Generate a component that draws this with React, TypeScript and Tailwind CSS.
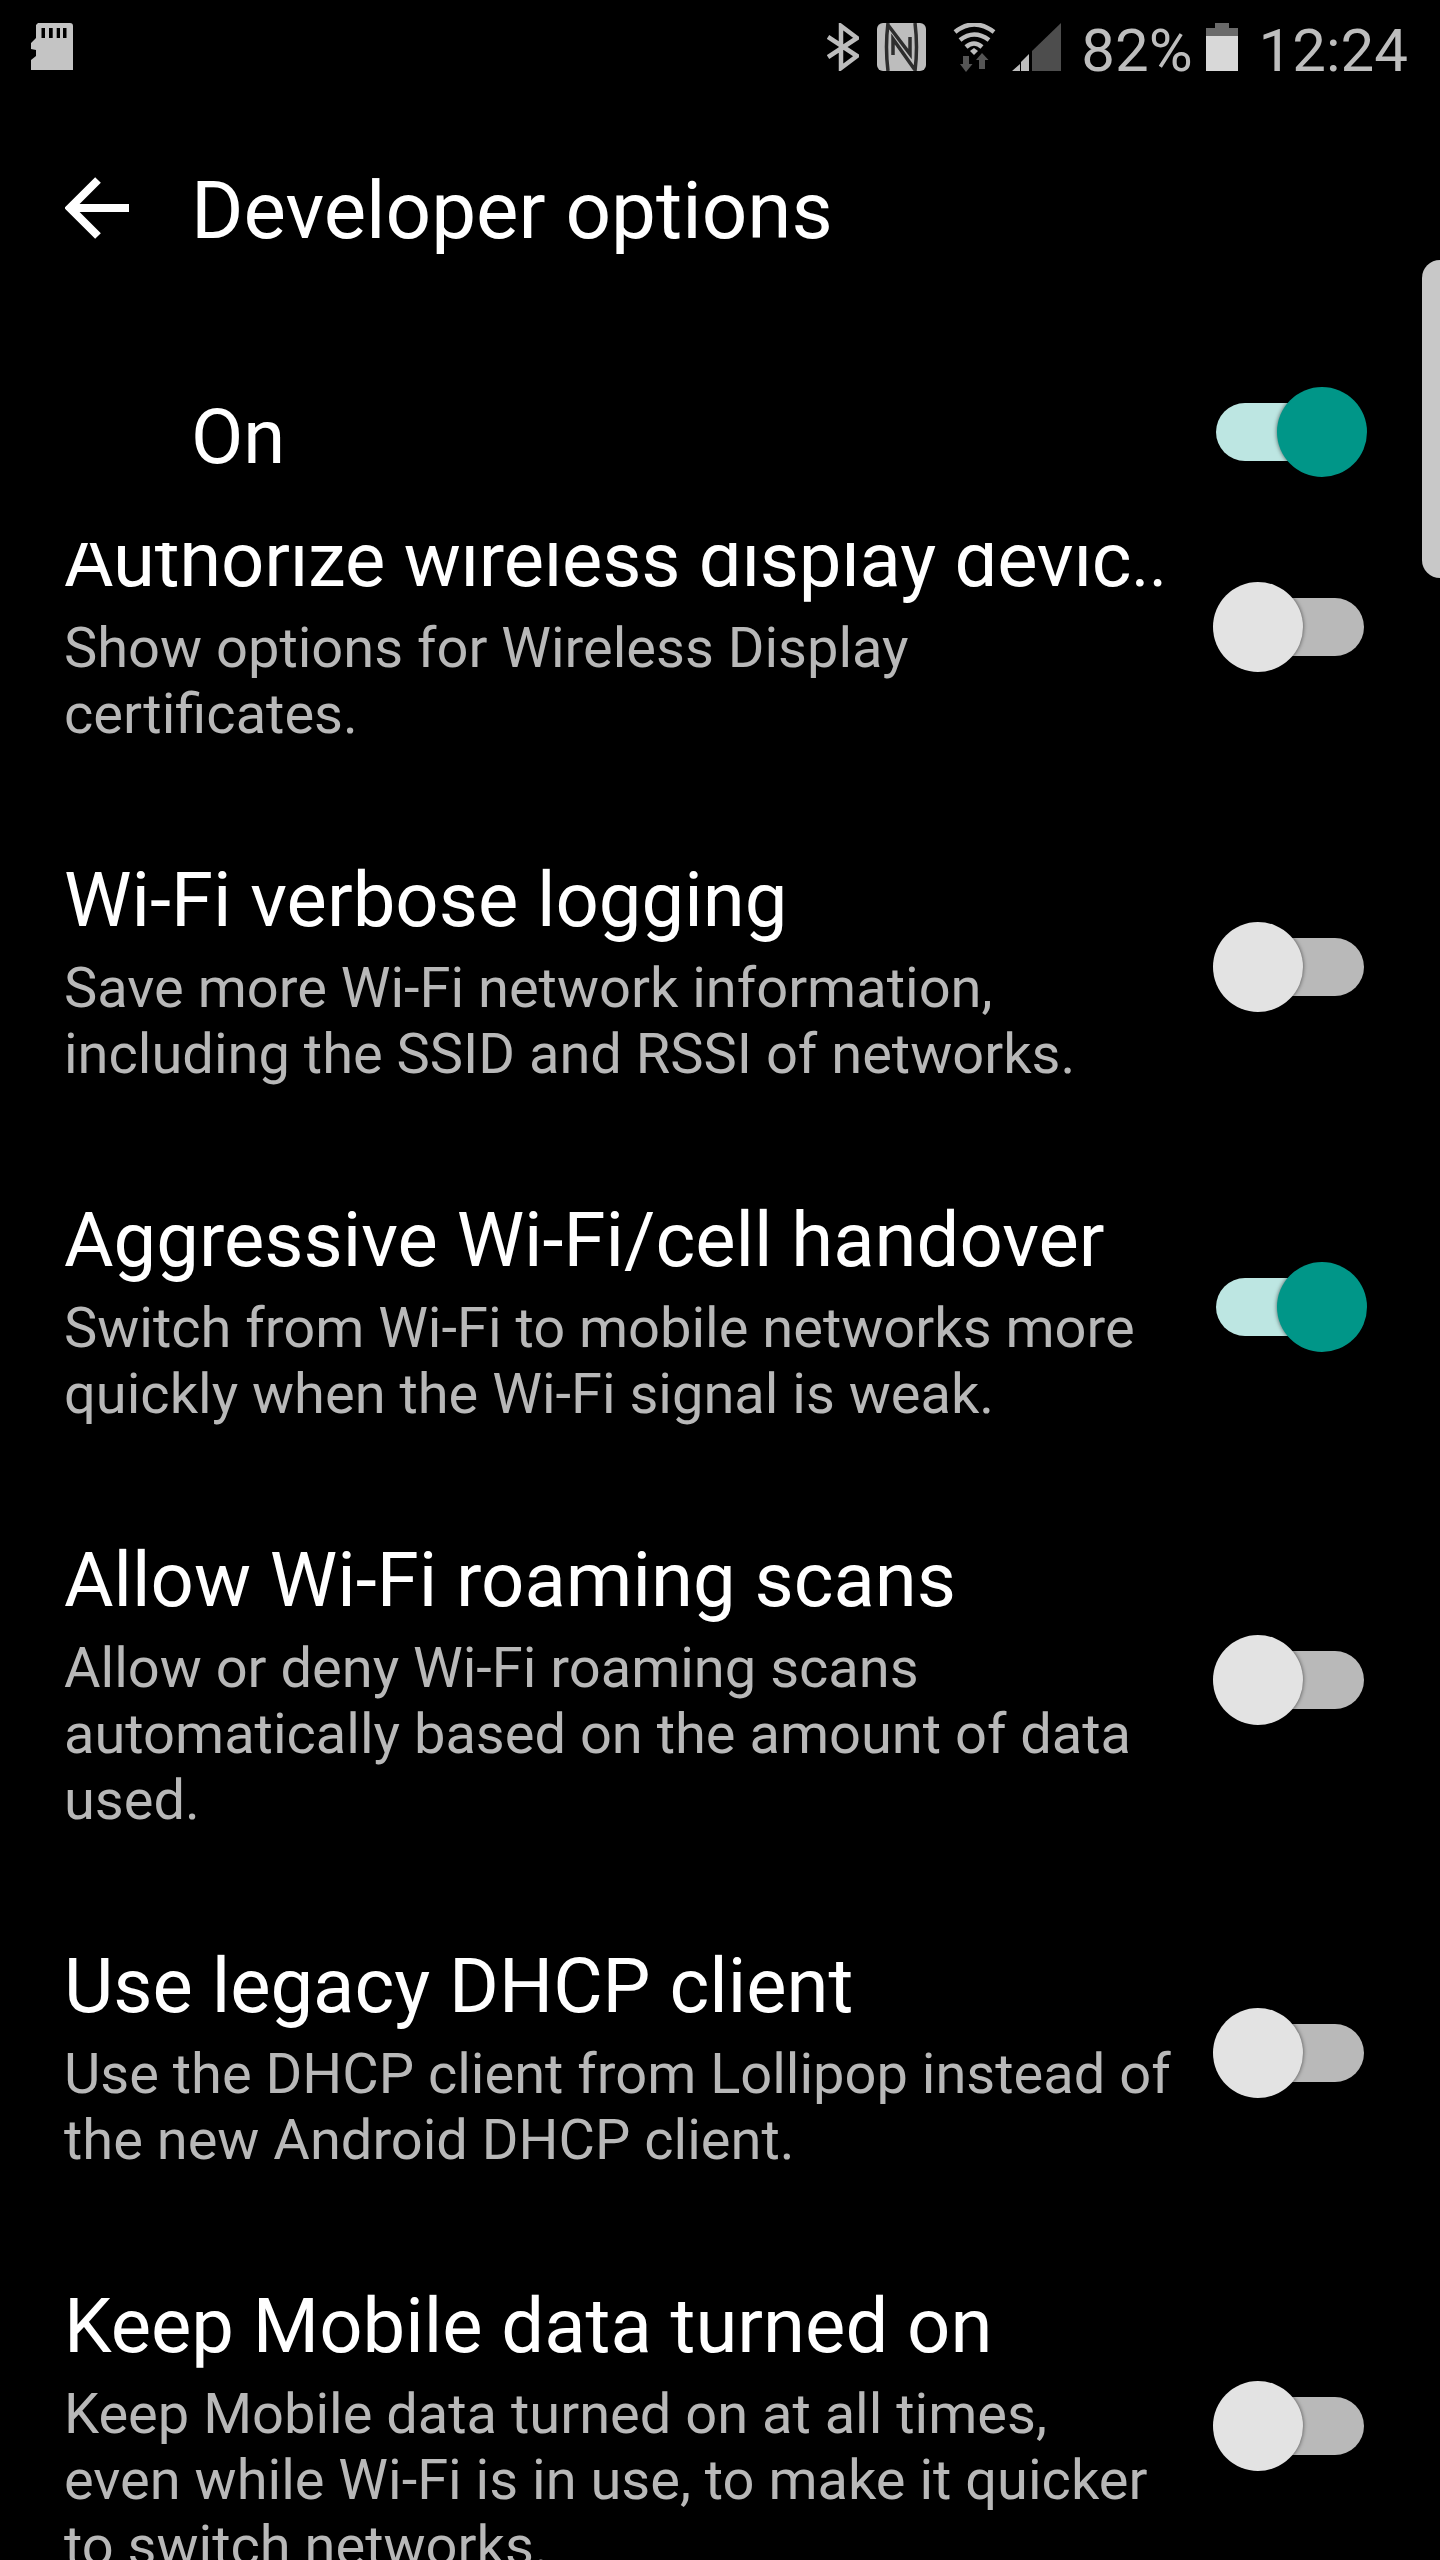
import React from "react";

type Row = { title: string; tail?: string; lines: string[]; on: boolean };

const rows: Row[] = [
  { title: "Authorize wireless display devic", tail: "..", lines: ["Show options for Wireless Display", "certificates."], on: false },
  { title: "Wi-Fi verbose logging", lines: ["Save more Wi-Fi network information,", "including the SSID and RSSI of networks."], on: false },
  { title: "Aggressive Wi-Fi/cell handover", lines: ["Switch from Wi-Fi to mobile networks more", "quickly when the Wi-Fi signal is weak."], on: true },
  { title: "Allow Wi-Fi roaming scans", lines: ["Allow or deny Wi-Fi roaming scans", "automatically based on the amount of data", "used."], on: false },
  { title: "Use legacy DHCP client", lines: ["Use the DHCP client from Lollipop instead of", "the new Android DHCP client."], on: false },
  { title: "Keep Mobile data turned on", lines: ["Keep Mobile data turned on at all times,", "even while Wi-Fi is in use, to make it quicker", "to switch networks."], on: false },
];

function Switch({ on }: { on: boolean }) {
  return (
    <div className="relative h-[90px] w-[154px] shrink-0">
      <div className={`absolute left-[3px] top-[16px] h-[58px] w-[148px] rounded-full ${on ? "bg-[#bde6e2]" : "bg-[#b9b9b9]"}`} />
      <div
        className={`absolute top-0 h-[90px] w-[90px] rounded-full shadow-[0_0_4px_rgba(0,0,0,0.6)] ${on ? "left-[64px] bg-[#009688]" : "left-0 bg-[#e3e3e3]"}`}
      />
    </div>
  );
}

function StatusIcons() {
  return (
    <>
      {/* bluetooth */}
      <svg width="32" height="48" viewBox="0 0 32 48" className="mr-[18px] shrink-0" fill="none" stroke="#bdbdbd" strokeWidth="4.5">
        <path d="M1 14 L30 33 L14 45 V3 L30 15 L1 34" />
      </svg>
      {/* NFC mark */}
      <svg width="49" height="48" viewBox="0 0 49 48" className="mr-[27px] shrink-0">
        <rect width="49" height="48" rx="6" fill="#bdbdbd" />
        <path d="M11 0 C9 16 9 32 11 48 M11 2 L33 31 V14 M16 32 V16 L38 47 M38 0 C40 16 40 32 38 48" stroke="#2e2e2e" strokeWidth="3.5" fill="none" />
      </svg>
      {/* wifi with activity arrows */}
      <svg width="43" height="49" viewBox="0 0 43 49" className="mr-[16px] shrink-0">
        <path d="M2 9 Q21 -6 41 9" stroke="#bdbdbd" strokeWidth="4.5" fill="none" />
        <path d="M7 17 Q21 6 36 17" stroke="#bdbdbd" strokeWidth="4.5" fill="none" />
        <path d="M13 24 Q21 17 29 24" stroke="#bdbdbd" strokeWidth="4.5" fill="none" />
        <path d="M17 28 L21 25 L25 28 L21 32 Z" fill="#bdbdbd" />
        <path d="M10 33 H16 V41 H19.5 L13 49 L7 41 H10 Z" fill="#555555" />
        <path d="M26 46 H32 V37 H35.5 L29 30 L23 37 H26 Z" fill="#555555" />
      </svg>
      {/* cell signal */}
      <svg width="49" height="48" viewBox="0 0 49 48" className="mr-[20px] shrink-0">
        <path d="M20 28 L49 0 V48 H20 Z" fill="#4d4d4d" />
        <path d="M0 48 L8 41 V48 Z M9 39 L17 31 V48 H9 Z" fill="#bdbdbd" />
      </svg>
    </>
  );
}

export default function App() {
  return (
    <div className="relative flex h-[2560px] w-[1440px] flex-col overflow-hidden bg-black font-['Roboto',sans-serif] text-white">
      {/* status bar */}
      <div className="flex h-[96px] shrink-0 items-start justify-between pl-[31px] pr-[32px] pt-[23px]">
        <svg width="42" height="47" viewBox="0 0 42 47">
          <path
            fillRule="evenodd"
            fill="#c4c4c4"
            d="M7 0 H39 Q42 0 42 3 V47 H0 V37 L5 33 V27 L0 26 V20 L5 15 V2 Z M10.5 5 V15 H14 V5 Z M18 5 V15 H21.7 V5 Z M25.7 5 V15 H29 V5 Z M32 5 V15 H35.5 V5 Z"
          />
        </svg>
        <div className="flex items-start">
          <StatusIcons />
          <span className="mr-[13px] text-[60px] leading-[55px] text-[#bdbdbd]">82%</span>
          <div className="mr-[21px] flex h-[48px] w-[32px] flex-col items-center">
            <div className="h-[5px] w-[14px] bg-[#6a6a6a]" />
            <div className="h-[8px] w-[32px] bg-[#6a6a6a]" />
            <div className="w-[32px] flex-1 bg-[#d8d8d8]" />
          </div>
          <span className="text-[60px] leading-[55px] text-[#bdbdbd]">12:24</span>
        </div>
      </div>

      {/* toolbar */}
      <div className="flex h-[224px] shrink-0 items-center pl-[65px]">
        <svg width="64" height="64" viewBox="0 0 64 64" fill="none" stroke="#fff" strokeWidth="8" className="mr-[62px] shrink-0">
          <path d="M64 32 H5 M33 4 L5 32 L33 60" />
        </svg>
        <span className="mt-[6px] text-[80px] leading-[88px]">Developer options</span>
      </div>

      {/* master switch */}
      <div className="flex h-[223px] shrink-0 items-center justify-between pl-[191px] pr-[73px] pt-[1px]">
        <span className="mt-[10px] text-[76px] leading-[88px]">On</span>
        <Switch on />
      </div>

      {/* settings list */}
      <div className="min-h-0 flex-1 overflow-hidden">
        <div className="-mt-[86px]">
          {rows.map((r) => (
            <div key={r.title} className="flex items-center justify-between pl-[64px] pr-[73px]">
              <div className="flex flex-col pb-[50px] pt-[59px]">
                <div className={`mb-[11px] h-[88px] whitespace-nowrap text-[76px] leading-[88px] ${r.tail ? "tracking-[-0.2px]" : ""}`}>
                  {r.title}
                  {r.tail ? <span className="text-[68px] leading-none">{r.tail}</span> : null}
                </div>
                {r.lines.map((l) => (
                  <div key={l} className="whitespace-nowrap text-[56px] leading-[66px] text-[#b8b8b8]">{l}</div>
                ))}
              </div>
              <Switch on={r.on} />
            </div>
          ))}
        </div>
      </div>

      {/* edge handle */}
      <div className="absolute right-0 top-[260px] h-[318px] w-[18px] rounded-l-[24px] bg-[#c8c8c8]" />
    </div>
  );
}
